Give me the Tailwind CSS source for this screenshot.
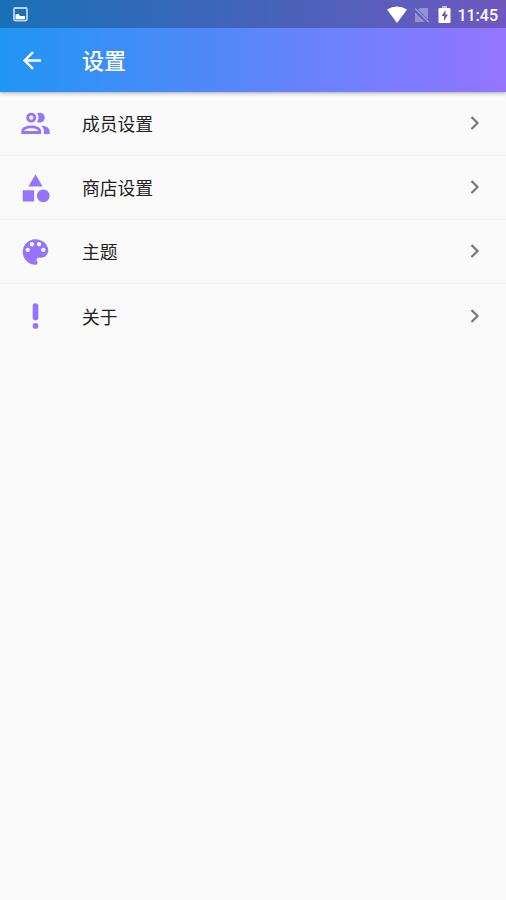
<!DOCTYPE html>
<html lang="zh-CN">
<head>
  <meta charset="UTF-8" />
  <meta name="viewport" content="width=device-width, initial-scale=1" />
  <title>设置</title>
  <script src="https://cdn.jsdelivr.net/npm/@tailwindcss/browser@4"></script>
</head>
<body class="min-h-screen overflow-hidden bg-[#fafafa] font-['Roboto','Noto_Sans_CJK_SC',sans-serif]">

  <!-- Header -->
  <header class="h-[92px] bg-linear-to-r/srgb from-[#2196f3] to-[#9575ff] shadow-[0_1px_4px_rgba(0,0,0,0.35)]">
    <!-- Status bar -->
    <div class="flex h-7 items-center bg-black/25 pl-[13px] pr-2 pt-px">
      <svg class="h-[15px] w-[15px]" viewBox="0 0 15 15">
        <rect x="1" y="1" width="13" height="12.5" rx="1.2" fill="none" stroke="#b9d3ed" stroke-width="1.8" />
        <path d="M2.500 12V7.500l3-.8L7 9h5v3z" fill="#fff" />
      </svg>
      <svg class="ml-auto h-[17px] w-5" viewBox="0 0 20 17">
        <path d="M0 3.500Q10-2.500 20 3.500L10 17z" fill="#fff" />
      </svg>
      <svg class="ml-[7px] h-4 w-4" viewBox="0 0 16 16">
        <path d="M3 1.500L14 12.500V1H6L4.200 2.700zM1 5.500V15h10z" fill="#fff" fill-opacity=".33" />
        <path d="M1 1.500L14.500 15" stroke="#fff" stroke-opacity=".4" stroke-width="1.3" />
      </svg>
      <svg class="ml-2 h-[17px] w-[13px]" viewBox="0 0 13 17">
        <path d="M4 0h5v2H4z" fill="#fff" fill-opacity=".6" />
        <path fill-rule="evenodd" d="M1.500 2h10Q12.500 2 12.500 3v13q0 1-1 1h-10q-1 0-1-1V3q0-1 1-1zM7.500 4L3.500 10H6v5l4-6.500H7.500z" fill="#fff" />
      </svg>
      <span class="ml-[6px] pt-[2px] text-[16px] font-medium leading-none text-white">11:45</span>
    </div>
    <!-- Title bar -->
    <div class="flex h-16 items-center pl-[23px]">
      <svg class="h-[19px] w-[19px]" viewBox="0 0 19 19" fill="none" stroke="#fff" stroke-width="2.4">
        <path d="M18 9.500H2M10 1.200L1.700 9.500 10 17.800" />
      </svg>
      <h1 class="ml-10 pt-[4px] text-[22px] font-medium leading-none text-white">设置</h1>
    </div>
  </header>

  <!-- Settings list -->
  <main class="text-[17.8px] text-[#222]">
    <a href="#members" class="flex h-16 items-center border-b border-[#f0f0f0] pl-[18px] pr-[26px]">
      <svg class="h-[34px] w-[35px]" viewBox="0 0 24 24" fill="#9575ff">
        <path d="M13.070 10.410A5 5 0 0 0 13.070 4.590A3.390 3.390 0 0 1 15 4A3.500 3.500 0 0 1 15 11A3.390 3.390 0 0 1 13.070 10.410M5.500 7.500A3.500 3.500 0 1 1 9 11A3.500 3.500 0 0 1 5.500 7.500M7.500 7.500A1.500 1.500 0 1 0 9 6A1.500 1.500 0 0 0 7.500 7.500M16 17V19H2V17S2 13 9 13 16 17 16 17M14 17C13.860 16.220 12.670 15 9 15S4.070 16.310 4 17M15.950 13A5.320 5.320 0 0 1 18 17V19H22V17S22 13.370 15.940 13Z" />
      </svg>
      <span class="ml-[29px] pt-1">成员设置</span>
      <svg class="mb-px ml-auto h-[14px] w-[10px]" viewBox="0 0 10 14" fill="none" stroke="#7a7a7a" stroke-width="2.2">
        <path d="M1.500 1L7.500 7 1.500 13" />
      </svg>
    </a>
    <a href="#stores" class="flex h-16 items-center border-b border-[#f0f0f0] pl-[18px] pr-[26px]">
      <svg class="h-[34px] w-[35px]" viewBox="0 0 24 24" fill="#9575ff">
        <path d="M11 13.500V21.500H3V13.500H11M12 2.300L17 11H7L12 2.300M17.500 13C20 13 22 15 22 17.500C22 20 20 22 17.500 22C15 22 13 20 13 17.500C13 15 15 13 17.500 13Z" />
      </svg>
      <span class="ml-[29px] pt-1">商店设置</span>
      <svg class="mb-px ml-auto h-[14px] w-[10px]" viewBox="0 0 10 14" fill="none" stroke="#7a7a7a" stroke-width="2.2">
        <path d="M1.500 1L7.500 7 1.500 13" />
      </svg>
    </a>
    <a href="#theme" class="flex h-16 items-center border-b border-[#f0f0f0] pl-[18px] pr-[26px]">
      <svg class="h-[34px] w-[35px]" viewBox="0 0 24 24" fill="#9575ff">
        <path d="M12 3c-4.970 0-9 4.030-9 9s4.030 9 9 9c.83 0 1.500-.67 1.500-1.500 0-.39-.15-.74-.39-1.010-.23-.26-.38-.61-.38-.99 0-.83.67-1.500 1.500-1.500H16c2.760 0 5-2.240 5-5 0-4.420-4.030-8-9-8zm-5.500 9c-.83 0-1.500-.67-1.500-1.500S5.670 9 6.500 9 8 9.670 8 10.500 7.330 12 6.500 12zm3-4C8.670 8 8 7.330 8 6.500S8.670 5 9.500 5s1.500.67 1.500 1.500S10.330 8 9.500 8zm5 0c-.83 0-1.500-.67-1.500-1.500S13.670 5 14.500 5s1.500.67 1.500 1.500S15.330 8 14.500 8zm3 4c-.83 0-1.500-.67-1.500-1.500S16.670 9 17.500 9s1.500.67 1.500 1.500-.67 1.500-1.500 1.500z" />
      </svg>
      <span class="ml-[29px] pt-1">主题</span>
      <svg class="mb-px ml-auto h-[14px] w-[10px]" viewBox="0 0 10 14" fill="none" stroke="#7a7a7a" stroke-width="2.2">
        <path d="M1.500 1L7.500 7 1.500 13" />
      </svg>
    </a>
    <a href="#about" class="flex h-16 items-center pl-[18px] pr-[26px]">
      <svg class="h-[34px] w-[35px]" viewBox="0 0 24 24" fill="#9575ff">
        <rect x="10" y="3" width="4" height="12" rx="2" />
        <circle cx="12" cy="19" r="2" />
      </svg>
      <span class="ml-[29px] pt-1">关于</span>
      <svg class="mb-px ml-auto h-[14px] w-[10px]" viewBox="0 0 10 14" fill="none" stroke="#7a7a7a" stroke-width="2.2">
        <path d="M1.500 1L7.500 7 1.500 13" />
      </svg>
    </a>
  </main>

</body>
</html>
